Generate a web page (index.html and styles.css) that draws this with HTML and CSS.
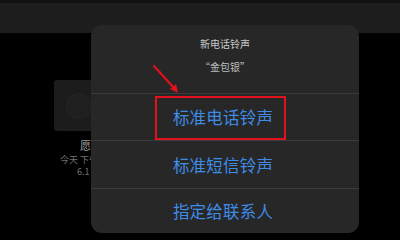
FILE: index.html
```html
<!DOCTYPE html>
<html>
<head>
<meta charset="utf-8">
<link rel="stylesheet" href="styles.css">
</head>
<body>
<div class="screen">
  <div class="topbar"><div class="topstrip"></div></div>
  <div class="content">
    <div class="item-card">
      <div class="thumb"><div class="circle"></div></div>
      <div class="label">愿</div>
      <div class="meta">今天 下午1:20</div>
      <div class="meta meta2">6.1 MB</div>
    </div>
  </div>
  <div class="sheet">
    <div class="sheet-head">
      <div class="sheet-title">新电话铃声</div>
      <div class="sheet-sub">“金包银”</div>
    </div>
    <div class="row row1">标准电话铃声</div>
    <div class="row row2">标准短信铃声</div>
    <div class="row row3">指定给联系人</div>
    <div class="highlight"></div>
  </div>
  <svg class="arrow" width="40" height="40" viewBox="0 0 40 40">
    <line x1="3" y1="3" x2="24" y2="26" stroke="#e0121c" stroke-width="2.2" stroke-linecap="round"/>
    <polygon points="27,30 19,26 25,21" fill="#e0121c"/>
  </svg>
</div>
</body>
</html>
```

FILE: styles.css
```css
* { box-sizing: border-box; margin: 0; padding: 0; }
html, body { width: 400px; height: 240px; background: #000; overflow: hidden; }
body { font-family: "Noto Sans CJK SC", "Noto Sans", sans-serif; }
.screen { position: relative; width: 400px; height: 240px; background: #000; }
.topbar { height: 33px; background: #1d1d1d; }
.topstrip { height: 3px; background: #121212; }
.content { padding: 47px 0 0 54px; }
.item-card { width: 80px; display: flex; flex-direction: column; align-items: flex-start; white-space: nowrap; }
.thumb { width: 60px; height: 51px; background: #1c1c1c; border-radius: 3px; display: flex; align-items: center; justify-content: flex-end; }
.circle { width: 26px; height: 26px; border-radius: 50%; border: 1px solid #262626; background: #1f1f1f; margin-right: 22px; }
.label { color: #9a9a9a; font-size: 11px; line-height: 14px; margin-top: 7px; margin-left: 26px; }
.meta { color: #707070; font-size: 9px; line-height: 12px; margin-top: 2px; margin-left: 6px; }
.meta2 { margin-top: 0; margin-left: 23px; }
.sheet { position: absolute; left: 91px; top: 25px; width: 268px; height: 208px; background: #272727; border-radius: 11px; overflow: hidden; display: flex; flex-direction: column; }
.sheet-head { height: 69px; display: flex; flex-direction: column; align-items: center; padding-top: 12px; border-bottom: 1px solid #3b3b3b; }
.sheet-title { color: #c9c9c9; font-size: 10px; line-height: 14px; }
.sheet-sub { color: #bdbdbd; font-size: 10px; line-height: 14px; margin-top: 9px; }
.row { display: flex; align-items: center; justify-content: center; color: #3f8ce6; font-size: 16.5px; letter-spacing: 0.2px; padding-right: 4px; }
.row1 { height: 47px; border-bottom: 1px solid #3b3b3b; }
.row2 { height: 48px; border-bottom: 1px solid #3b3b3b; }
.row3 { flex: 1; }
.highlight { position: absolute; left: 64px; top: 71px; width: 131px; height: 44px; border: 2px solid #e0121c; }
.arrow { position: absolute; left: 151px; top: 63px; }
```
